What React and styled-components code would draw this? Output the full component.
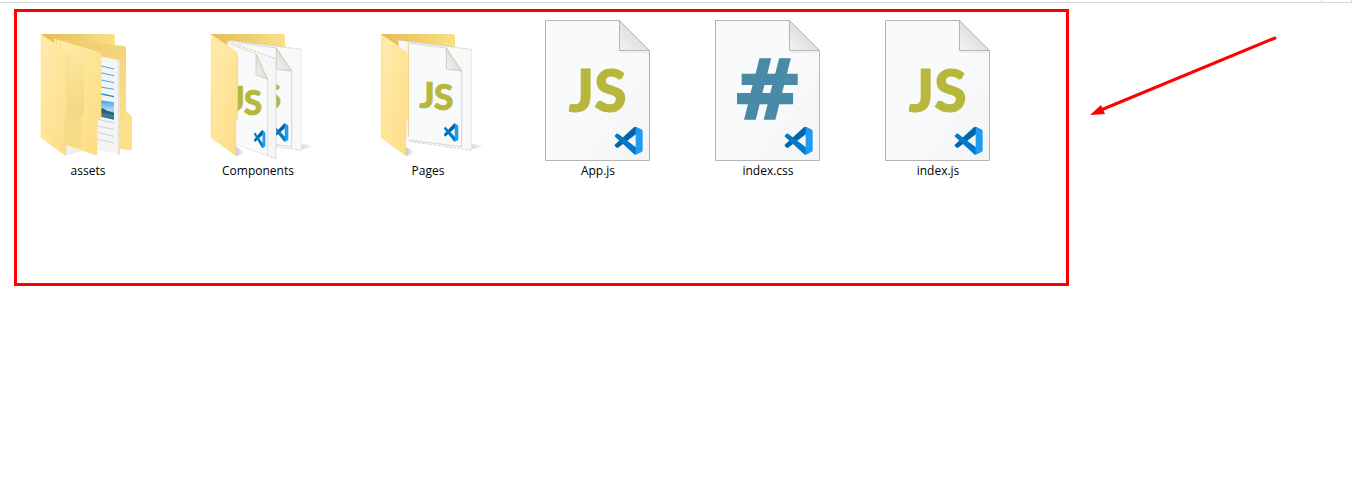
import React from "react";
import styled, { createGlobalStyle } from "styled-components";

const GlobalStyle = createGlobalStyle`
  body {
    margin: 0;
    background: #ffffff;
    color: #000000;
    font-family: "Open Sans", "Noto Sans", sans-serif;
  }
`;

const PaneEdge = styled.header`
  display: flex;
  justify-content: flex-end;
  height: 2px;
  margin-right: 4px;
  border-bottom: 1px solid #d9d9d9;
  border-right: 1px solid #d9d9d9;
`;

const PaneCorner = styled.div`
  width: 29px;
  border-left: 1px solid #d9d9d9;
`;

const Content = styled.main`
  display: flex;
  align-items: flex-start;
  gap: 20px;
  padding: 6px 79px 0 14px;
`;

const Highlight = styled.section`
  box-sizing: border-box;
  flex: 1;
  min-height: 277px;
  padding: 4px 0;
  border: 3px solid #ff0000;
`;

const FileGrid = styled.ul`
  display: flex;
  flex-wrap: wrap;
  gap: 28px;
  margin: 0;
  padding: 0;
  list-style: none;
`;

const FileItem = styled.li`
  display: flex;
  flex-direction: column;
  align-items: center;
  width: 142px;
`;

const Icon = styled.svg`
  display: block;
  width: 142px;
  height: 147px;
`;

const FileName = styled.span`
  font-size: 12px;
  line-height: 16px;
`;

const Arrow = styled.svg`
  flex: none;
  width: 188px;
  height: 80px;
  margin-top: 27px;
`;

const Glyph = styled.text`
  font-family: ${(p) => p.$family || "Lato"}, sans-serif;
  font-weight: ${(p) => p.$weight || 900};
  font-size: ${(p) => p.$size}px;
  fill: ${(p) => p.$color || "#b7b73b"};
  stroke: ${(p) => p.$color || "#b7b73b"};
  stroke-width: ${(p) => p.$stroke || 0};
`;

function Gradients() {
  return (
    <svg width="0" height="0" style={{ position: "absolute" }} aria-hidden="true">
      <defs>
        <linearGradient id="paper" x1="0" y1="0" x2="1" y2="1">
          <stop offset="0" stopColor="#fafafa" />
          <stop offset="0.5" stopColor="#f9fafb" />
          <stop offset="1" stopColor="#f3f4f6" />
        </linearGradient>
        <linearGradient id="fold" x1="0" y1="0.9" x2="0.6" y2="0.3">
          <stop offset="0" stopColor="#f2f2f2" />
          <stop offset="1" stopColor="#dadada" />
        </linearGradient>
        <linearGradient id="back" x1="0" y1="0" x2="1" y2="0.1">
          <stop offset="0" stopColor="#e3bc55" />
          <stop offset="0.5" stopColor="#efcd6c" />
          <stop offset="1" stopColor="#fbe08a" />
        </linearGradient>
        <linearGradient id="second" x1="0" y1="0" x2="0.6" y2="1">
          <stop offset="0" stopColor="#ecca68" />
          <stop offset="0.5" stopColor="#f4d57a" />
          <stop offset="1" stopColor="#fce089" />
        </linearGradient>
        <linearGradient id="flap" x1="0" y1="0" x2="1" y2="1">
          <stop offset="0" stopColor="#ffecb0" />
          <stop offset="0.5" stopColor="#ffe59a" />
          <stop offset="1" stopColor="#fddc86" />
        </linearGradient>
        <linearGradient id="inner" x1="0" y1="0" x2="1" y2="1">
          <stop offset="0" stopColor="#ffebae" />
          <stop offset="0.5" stopColor="#fde596" />
          <stop offset="1" stopColor="#fcdb7d" />
        </linearGradient>
        <linearGradient id="shade" x1="0" y1="0" x2="0" y2="1">
          <stop offset="0" stopColor="#e6ca73" stopOpacity="0" />
          <stop offset="0.6" stopColor="#e6ca73" stopOpacity="0.4" />
          <stop offset="1" stopColor="#e6ca73" stopOpacity="0.2" />
        </linearGradient>
        <linearGradient id="photo" x1="0" y1="0" x2="0" y2="1">
          <stop offset="0" stopColor="#3d9fdf" />
          <stop offset="0.55" stopColor="#b6def2" />
          <stop offset="0.7" stopColor="#4b8290" />
          <stop offset="1" stopColor="#216eaf" />
        </linearGradient>
        <linearGradient id="shadow" x1="0" y1="0" x2="1" y2="0">
          <stop offset="0" stopColor="#000" stopOpacity="0.22" />
          <stop offset="1" stopColor="#000" stopOpacity="0" />
        </linearGradient>
      </defs>
    </svg>
  );
}

function CodeBadge({ transform }) {
  return (
    <g transform={transform}>
      <path fill="#0065a9" d="M96.46 10.8 75.86.88a6.23 6.23 0 0 0-7.11 1.2L1.3 63.58a4.17 4.17 0 0 0 0 6.17l5.51 5a4.17 4.17 0 0 0 5.32.24L93.36 13.37A4.14 4.14 0 0 1 100 16.67v-.24a6.25 6.25 0 0 0-3.54-5.63Z" />
      <path fill="#007acc" d="m96.46 89.2-20.6 9.92a6.23 6.23 0 0 1-7.11-1.2L1.3 36.42a4.17 4.17 0 0 1 0-6.17l5.51-5a4.17 4.17 0 0 1 5.32-.24l81.23 61.62a4.14 4.14 0 0 0 6.64-3.3v.24a6.25 6.25 0 0 1-3.54 5.63Z" />
      <path fill="#1f9cf0" d="M75.86 99.13a6.23 6.23 0 0 1-7.11-1.21A3.66 3.66 0 0 0 75 95.33V4.67a3.66 3.66 0 0 0-6.25-2.59 6.23 6.23 0 0 1 7.11-1.21l20.6 9.91A6.25 6.25 0 0 1 100 16.41v67.18a6.25 6.25 0 0 1-3.54 5.63Z" />
    </g>
  );
}

function DocumentIcon({ kind }) {
  return (
    <Icon viewBox="0 0 426 441" aria-hidden="true">
      <g transform="translate(24 -18)">
        <path d="M31.5 31.5H253.5L343.5 121.5V451.5H31.5Z" fill="url(#paper)" stroke="#b4b4b4" strokeWidth="3" />
        <path d="M256 125H340V129H260Z" fill="#e9e9e9" />
        <path d="M253.5 31.5V121.5H343.5Z" fill="url(#fold)" stroke="#b4b4b4" strokeWidth="3" />
        {kind === "css" ? (
          <Glyph x="187" y="325" textAnchor="middle" $family="DejaVu Sans" $weight={700} $size={248} $color="#498ba7" $stroke={8}>#</Glyph>
        ) : (
          <Glyph x="188" y="305" textAnchor="middle" $size={176} $stroke={3}>JS</Glyph>
        )}
        <CodeBadge transform="translate(239 350) scale(.84)" />
      </g>
    </Icon>
  );
}

function FolderFlap() {
  return (
    <>
      <path d="M32 42 106 92Q113 97 113 106V295L107 304V408L34 355Q32 353 32 350Z" fill="url(#flap)" />
      <path d="M38 49V352" stroke="#f8df94" strokeWidth="2" />
      <path d="M107 404V304L113 295V106" fill="none" stroke="#f4d078" strokeWidth="2" />
    </>
  );
}

function AssetsIcon() {
  return (
    <Icon viewBox="0 0 426 441" aria-hidden="true">
      <g transform="translate(39 12)">
        <path d="M32 42H250Q255 42 255 48V350H80Z" fill="url(#back)" />
        <path d="M76 56 281 78Q288 79 288 86V272L306 291V384Q306 390 300 390L160 374Z" fill="url(#second)" />
        <path d="M288 272 306 291V384Q306 390 300 390L288 389Z" fill="#fde08a" />
        <path d="M190 104 269 121V404L190 386Z" fill="#f4f4f5" />
        <path d="M264 120 269 121V404L264 403Z" fill="#dedee1" />
        <g stroke="#4aa6d8" strokeWidth="3">
          <path d="M200 135 252 147M200 156 252 167M200 177 252 188M200 199 252 208" />
          <path d="M200 219 252 230" strokeWidth="4" stroke="#258dcb" />
        </g>
        <path d="M205 239 252 247V299L205 289Z" fill="url(#photo)" />
        <path d="M205 267Q215 260 228 271L252 279V285L205 278Z" fill="#315f72" />
        <g stroke="#bcbcc0" strokeWidth="2">
          <path d="M200 297 252 309M200 317 252 329M200 337 252 349M200 357 252 369" />
        </g>
        <path d="M107 378 160 393 107 407Z" fill="#efefef" />
        <path d="M73 56 207 96Q214 99 214 106V292L202 304V402Q202 406 196 405L104 375 73 350Z" fill="url(#inner)" />
        <path d="M100 76 156 120Q162 124 162 130V280L153 293V388L100 374Z" fill="url(#shade)" />
        <path d="M80 59V75M92 62V84" stroke="#edce79" strokeWidth="2" />
        <FolderFlap />
      </g>
    </Icon>
  );
}

function FolderBack() {
  return (
    <>
      <path d="M32 42H250Q255 42 255 48V350H80Z" fill="url(#back)" />
      <path d="M303 372 343 376Q324 390 285 389Z" fill="url(#shadow)" />
      <path d="M107 380 135 395Q122 406 107 408Z" fill="url(#shadow)" />
      <path d="M86 61 305 88V391L110 363Z" fill="#f8f8f9" />
      <path d="M304 88V391" stroke="#e0e0e2" strokeWidth="2" />
      <path d="M86 61 305 88M305 391 116 364" fill="none" stroke="#bdbdbd" strokeWidth="2" strokeDasharray="8 4" />
    </>
  );
}

function PreviewSheet() {
  return (
    <>
      <path d="M116 69 229 84 275 153V380L116 360Z" fill="#f8f9fa" />
      <path d="M275 153V380" stroke="#c4c4c6" strokeWidth="2" />
      <path d="M116 69 229 84M275 380 116 360" stroke="#b5b5b5" strokeWidth="2" strokeDasharray="9 3" />
      <path d="M229 84V147L275 153Z" fill="url(#fold)" stroke="#b8b8b8" strokeWidth="2" />
      <path d="M229 84 275 153" stroke="#ead084" strokeWidth="2" />
    </>
  );
}

function PagesIcon() {
  return (
    <Icon viewBox="0 0 426 441" aria-hidden="true">
      <g transform="translate(39 12)">
        <FolderBack />
        <FolderFlap />
        <path d="M86 61 116 68V350L113 352V106Q113 97 106 92L86 78Z" fill="#f8f8f8" />
        <PreviewSheet />
        <path d="M115 70V350" stroke="#efd17b" strokeWidth="3" />
        <Glyph x="148" y="264" $size={108} $stroke={2}>J</Glyph>
        <Glyph x="191" y="270" $size={108} $stroke={2}>S</Glyph>
        <CodeBadge transform="matrix(.43 .04 0 .55 222 307)" />
      </g>
    </Icon>
  );
}

function ComponentsIcon() {
  return (
    <Icon viewBox="0 0 426 441" aria-hidden="true">
      <g transform="translate(39 12)">
        <FolderBack />
        <PreviewSheet />
        <Glyph x="186" y="266" $size={104} $stroke={2}>S</Glyph>
        <CodeBadge transform="matrix(.43 .04 0 .55 222 307)" />
        <path d="M82 63 228 117V416L107 373Z" fill="#f6f6f7" />
        <path d="M228 117V416" stroke="#d2d2d4" strokeWidth="2" />
        <path d="M82 63 228 117M228 416 107 373" fill="none" stroke="#b9b9b9" strokeWidth="2" strokeDasharray="8 4" />
        <path d="M90 72 168 102 203 178V406L107 373Z" fill="#f9fafb" />
        <path d="M203 178V406" stroke="#cacacc" strokeWidth="2" />
        <path d="M168 102V165L203 178Z" fill="url(#fold)" stroke="#bebebe" strokeWidth="2" />
        <path d="M90 72 168 102 203 178" fill="none" stroke="#ead084" strokeWidth="2" />
        <Glyph x="90" y="272" $size={104} $stroke={2}>J</Glyph>
        <Glyph x="131" y="284" $size={100} $stroke={2}>S</Glyph>
        <CodeBadge transform="matrix(.34 .08 0 .54 162 324)" />
        <FolderFlap />
      </g>
    </Icon>
  );
}

const FILES = [
  { name: "assets", icon: <AssetsIcon /> },
  { name: "Components", icon: <ComponentsIcon /> },
  { name: "Pages", icon: <PagesIcon /> },
  { name: "App.js", icon: <DocumentIcon kind="js" /> },
  { name: "index.css", icon: <DocumentIcon kind="css" /> },
  { name: "index.js", icon: <DocumentIcon kind="js" /> },
];

export default function App() {
  return (
    <>
      <GlobalStyle />
      <Gradients />
      <PaneEdge>
        <PaneCorner />
      </PaneEdge>
      <Content>
        <Highlight>
          <FileGrid>
            {FILES.map((file) => (
              <FileItem key={file.name}>
                {file.icon}
                <FileName>{file.name}</FileName>
              </FileItem>
            ))}
          </FileGrid>
        </Highlight>
        <Arrow viewBox="0 0 188 80" aria-hidden="true">
          <path d="M186 2 12 74" stroke="#ff0000" strokeWidth="3" strokeLinecap="round" />
          <path d="M1 79 12 69 16 78Z" fill="#ff0000" />
        </Arrow>
      </Content>
    </>
  );
}
